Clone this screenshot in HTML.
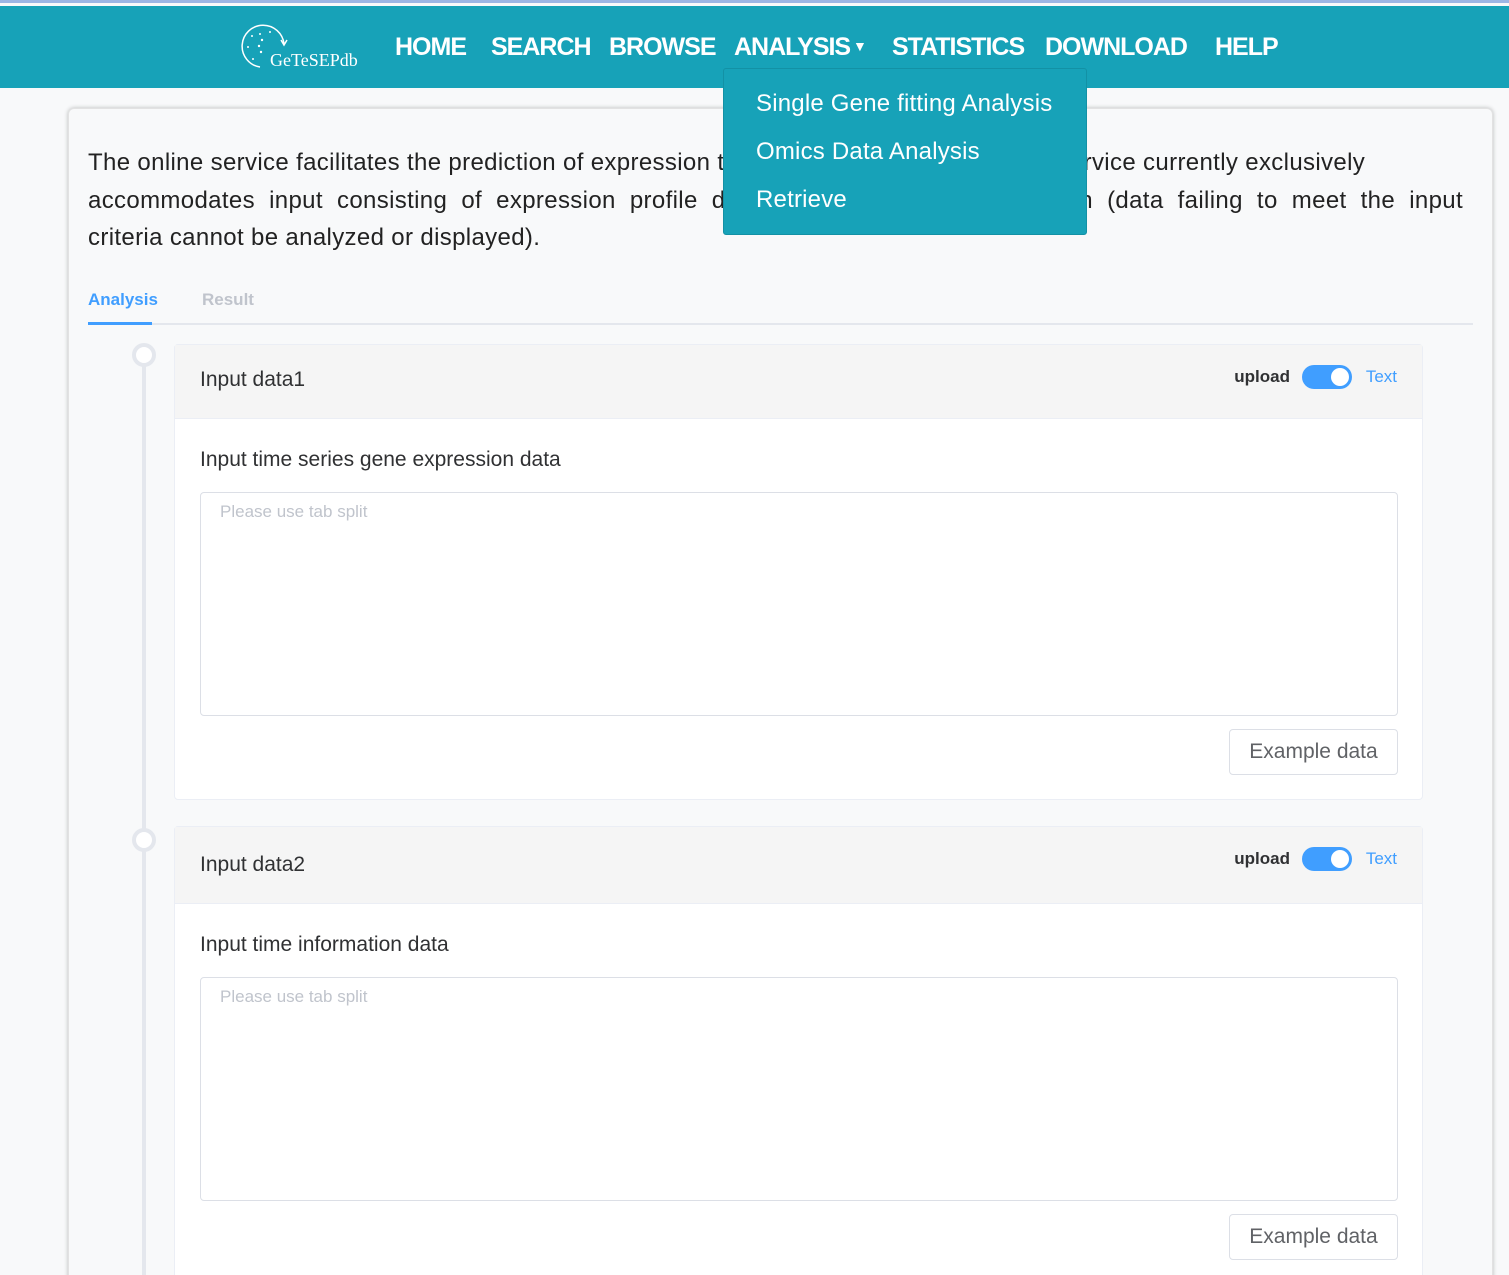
<!DOCTYPE html>
<html><head><meta charset="utf-8"><style>
*{box-sizing:border-box;margin:0;padding:0}
html,body{width:1509px;height:1275px;overflow:hidden}
body{background:#f8f9fa;font-family:"Liberation Sans",sans-serif;position:relative;color:#212529}
.abs{position:absolute}
.top{left:0;top:0;width:1509px;height:3px;background:#9cb6e4}
.nav{left:0;top:6px;width:1509px;height:82px;background:#17a2b8}
.nav a{position:absolute;top:27px;color:#fff;font-weight:bold;font-size:25px;letter-spacing:-1px;text-decoration:none}
.dd{left:723px;top:68px;width:364px;height:167px;background:#17a2b8;border-radius:3px;border:1px solid #1391a5}
.dd div{position:absolute;left:32px;color:#fff;font-size:24px;letter-spacing:0.2px}
.card{left:68px;top:108px;width:1425px;height:1200px;background:#f8f9fa;border-radius:6px;box-shadow:0 0 4px rgba(0,0,0,.25);border:1px solid #e2e2e2}
.p{left:88px;top:144px;width:1420px;font-size:24px;line-height:37.5px;color:#222;letter-spacing:0.35px;white-space:nowrap}
.j{width:1375px;text-align:justify;text-align-last:justify;white-space:normal}
.tab{top:290px;font-size:17px;font-weight:bold}
.box{left:174px;width:1249px;background:#fff;border:1px solid #ebeef5;border-radius:4px}
.hd{height:74px;background:#f5f5f5;border-bottom:1px solid #ebeef5;position:relative}
.hd .t{position:absolute;left:25px;top:23px;font-size:21px;color:#303133}
.up{position:absolute;right:132px;top:22px;font-size:17px;font-weight:bold;color:#303133}
.sw{position:absolute;right:70px;top:20px;width:50px;height:24px;border-radius:12px;background:#409eff}
.sw:after{content:"";position:absolute;right:3px;top:3px;width:18px;height:18px;border-radius:50%;background:#fff}
.tx{position:absolute;right:25px;top:22px;font-size:17px;color:#409eff}
.lbl{position:absolute;left:25px;font-size:21px;color:#303133}
.ta{position:absolute;left:25px;width:1198px;height:224px;border:1px solid #dcdfe6;border-radius:4px;padding:9px 19px;font-size:17px;color:#c0c4cc}
.btn{position:absolute;left:1054px;width:169px;height:46px;border:1px solid #dcdfe6;border-radius:4px;font-size:21px;color:#606266;text-align:center;line-height:44px}
.circ{width:24px;height:24px;border:4px solid #e4e7ed;border-radius:50%;background:#fff}
</style></head><body>
<div class="abs top"></div>
<div class="abs nav">
<svg class="abs" style="left:238px;top:16px" width="50" height="50" viewBox="0 0 50 50"><path d="M22 45 A21 21 0 1 1 46 22" fill="none" stroke="#fff" stroke-width="1.5"/><path d="M43 18 l3 5 l3 -5" fill="none" stroke="#fff" stroke-width="1.5"/><g fill="#fff"><circle cx="22" cy="12" r="1"/><circle cx="24" cy="18" r="1.2"/><circle cx="21" cy="24" r="1.2"/><circle cx="23" cy="30" r="1.2"/><circle cx="10" cy="25" r="1"/><circle cx="14" cy="14" r="1"/><circle cx="15" cy="37" r="1"/><circle cx="32" cy="10" r="1"/></g></svg>
<div class="abs" style="left:270px;top:44px;color:#fff;font-family:'Liberation Serif',serif;font-size:18px">GeTeSEPdb</div>
<a style="left:395px">HOME</a><a style="left:491px">SEARCH</a><a style="left:609px">BROWSE</a><a style="left:734px">ANALYSIS<span style="font-size:14px;vertical-align:4px"> ▼</span></a><a style="left:892px">STATISTICS</a><a style="left:1045px">DOWNLOAD</a><a style="left:1215px">HELP</a>
</div>
<div class="abs card"></div>
<div class="abs p"><div>The online service facilitates the prediction of expression trends in time series data. The service currently exclusively</div><div class="j">accommodates input consisting of expression profile data and time series information (data failing to meet the input</div><div>criteria cannot be analyzed or displayed).</div></div>
<div class="abs tab" style="left:88px;color:#409eff">Analysis</div>
<div class="abs tab" style="left:202px;color:#c0c4cc">Result</div>
<div class="abs" style="left:88px;top:323px;width:1385px;height:2px;background:#e4e7ed"></div>
<div class="abs" style="left:88px;top:322px;width:64px;height:3px;background:#409eff"></div>
<div class="abs" style="left:142px;top:360px;width:4px;height:920px;background:#e4e7ed"></div>
<div class="abs circ" style="left:132px;top:343px"></div>
<div class="abs circ" style="left:132px;top:828px"></div>
<div class="abs box" style="top:344px;height:456px">
<div class="hd"><div class="t">Input data1</div><div class="up">upload</div><div class="sw"></div><div class="tx">Text</div></div>
<div class="lbl" style="top:103px">Input time series gene expression data</div>
<div class="ta" style="top:147px">Please use tab split</div>
<div class="btn" style="top:384px">Example data</div>
</div>
<div class="abs box" style="top:826px;height:460px">
<div class="hd" style="height:77px"><div class="t" style="top:26px">Input data2</div><div class="up">upload</div><div class="sw"></div><div class="tx">Text</div></div>
<div class="lbl" style="top:106px">Input time information data</div>
<div class="ta" style="top:150px">Please use tab split</div>
<div class="btn" style="top:387px">Example data</div>
</div>
<div class="abs dd"><div style="top:21px">Single Gene fitting Analysis</div><div style="top:69px">Omics Data Analysis</div><div style="top:117px">Retrieve</div></div>
</body></html>
